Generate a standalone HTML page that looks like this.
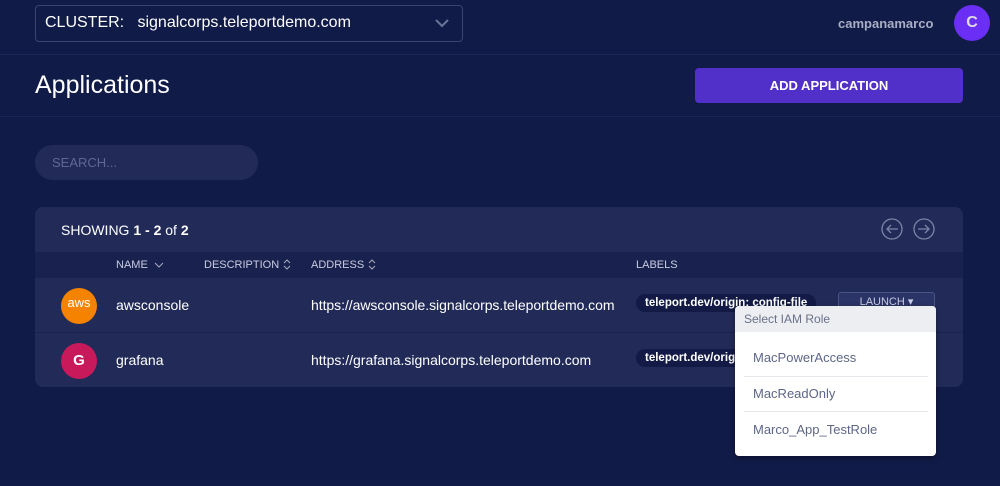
<!DOCTYPE html>
<html><head><style>
*{box-sizing:border-box;margin:0;padding:0}
body{width:1000px;height:486px;background:#111b48;font-family:"Liberation Sans",sans-serif;color:#fff;position:relative;overflow:hidden}
.a{position:absolute}
</style></head><body>
<div class="a" style="left:35px;top:5px;width:428px;height:37px;border:1px solid #3a4470;border-radius:4px"></div>
<div class="a" style="left:45px;top:14px;font-size:16px">CLUSTER:&nbsp;&nbsp; signalcorps.teleportdemo.com</div>
<svg class="a" style="left:434px;top:17px" width="16" height="12"><path d="M2 3 L8 9 L14 3" stroke="#6b7398" stroke-width="2" fill="none"/></svg>
<div class="a" style="left:838px;top:16px;font-size:13px;font-weight:bold;color:#a8aec4">campanamarco</div>
<div class="a" style="left:954px;top:5px;width:36px;height:36px;border-radius:50%;background:#6b2ef5;text-align:center;line-height:36px;font-weight:bold;font-size:16px;color:#ddd">C</div>
<div class="a" style="left:0;top:54px;width:1000px;height:1px;background:#1c2655"></div>
<div class="a" style="left:35px;top:71px;font-size:25px">Applications</div>
<div class="a" style="left:695px;top:68px;width:268px;height:35px;background:#512fc9;border-radius:4px;text-align:center;line-height:35px;font-weight:bold;font-size:13px">ADD APPLICATION</div>
<div class="a" style="left:0;top:116px;width:1000px;height:1px;background:#1c2655"></div>
<div class="a" style="left:35px;top:145px;width:223px;height:35px;background:#222b58;border-radius:18px;padding-left:17px;line-height:35px;font-size:13px;color:#5e6790">SEARCH...</div>
<div class="a" style="left:35px;top:207px;width:928px;height:180px;background:#222b58;border-radius:8px;overflow:hidden">
<div class="a" style="left:26px;top:15px;font-size:14px">SHOWING <b>1 - 2</b> of <b>2</b></div>
<svg class="a" style="left:846px;top:10px" width="56" height="24"><g stroke="#7c84a6" stroke-width="1.3" fill="none"><circle cx="11" cy="12" r="10"/><path d="M17 12H6M10 8l-4 4 4 4"/><circle cx="43" cy="12" r="10"/><path d="M37 12h11M44 8l4 4-4 4"/></g></svg>
<div class="a" style="left:0;top:45px;width:928px;height:26px;background:#19224f"></div>
<div class="a" style="left:81px;top:52px;font-size:11px;color:#c8cce0">NAME</div>
<svg class="a" style="left:119px;top:54px" width="10" height="8"><path d="M1 2l4 4 4-4" stroke="#aab" fill="none"/></svg>
<div class="a" style="left:169px;top:52px;font-size:11px;color:#c8cce0">DESCRIPTION</div>
<svg class="a" style="left:248px;top:52px" width="8" height="11"><path d="M1 4l3-3 3 3M1 7l3 3 3-3" stroke="#aab" fill="none"/></svg>
<div class="a" style="left:276px;top:52px;font-size:11px;color:#c8cce0">ADDRESS</div>
<svg class="a" style="left:333px;top:52px" width="8" height="11"><path d="M1 4l3-3 3 3M1 7l3 3 3-3" stroke="#aab" fill="none"/></svg>
<div class="a" style="left:601px;top:52px;font-size:11px;color:#c8cce0">LABELS</div>
<div class="a" style="left:0;top:125px;width:928px;height:1px;background:#1a234e"></div>
<div class="a" style="left:26px;top:81px;width:36px;height:36px;border-radius:50%;background:#f58300;text-align:center;font-size:13px;line-height:30px">aws</div>
<div class="a" style="left:81px;top:90px;font-size:14px">awsconsole</div>
<div class="a" style="left:276px;top:90px;font-size:14px;letter-spacing:-0.05px">https://awsconsole.signalcorps.teleportdemo.com</div>
<div class="a" style="left:601px;top:87px;height:18px;padding:0 9px;background:#121a45;border-radius:9px;font-size:11.5px;font-weight:bold;line-height:18px">teleport.dev/origin: config-file</div>
<div class="a" style="left:803px;top:85px;width:97px;height:21px;border:1px solid #4a5384;background:#2b3466;border-radius:3px;font-size:11px;text-align:center;line-height:19px;color:#c8cce0">LAUNCH ▾</div>
<div class="a" style="left:26px;top:136px;width:36px;height:36px;border-radius:50%;background:#c8195a;text-align:center;font-size:15px;font-weight:bold;line-height:36px">G</div>
<div class="a" style="left:81px;top:145px;font-size:14px">grafana</div>
<div class="a" style="left:276px;top:145px;font-size:14px">https://grafana.signalcorps.teleportdemo.com</div>
<div class="a" style="left:601px;top:142px;height:18px;padding:0 9px;background:#121a45;border-radius:9px;font-size:11.5px;font-weight:bold;line-height:18px">teleport.dev/origin: config-file</div>
</div>
<div class="a" style="left:735px;top:306px;width:201px;height:150px;background:#fff;border-radius:4px;overflow:hidden;box-shadow:0 2px 6px rgba(0,0,0,.4)">
<div style="height:26px;background:#eceef2;padding-left:9px;line-height:26px;font-size:12px;color:#6a7088">Select IAM Role</div>
<div class="a" style="left:18px;top:44px;font-size:13px;color:#5e6688">MacPowerAccess</div>
<div class="a" style="left:9px;top:70px;width:184px;height:1px;background:#e4e6ec"></div>
<div class="a" style="left:18px;top:80px;font-size:13px;color:#5e6688">MacReadOnly</div>
<div class="a" style="left:9px;top:105px;width:184px;height:1px;background:#e4e6ec"></div>
<div class="a" style="left:18px;top:116px;font-size:13px;color:#5e6688">Marco_App_TestRole</div>
</div>
</body></html>
